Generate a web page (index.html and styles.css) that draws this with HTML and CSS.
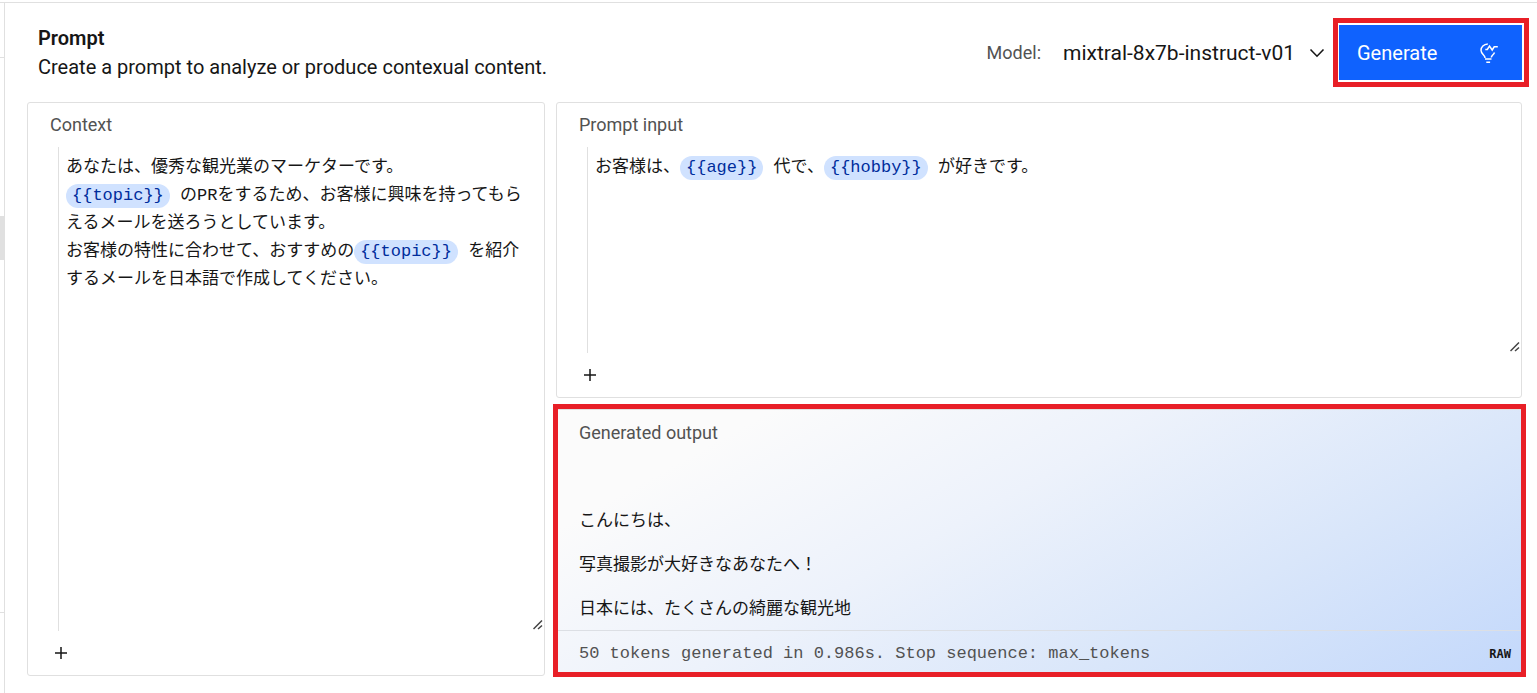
FILE: index.html
```
<!DOCTYPE html>
<html lang="en">
<head>
<meta charset="utf-8">
<title>Prompt</title>
<link rel="stylesheet" href="styles.css">
</head>
<body>
<div class="app">
  <aside class="rail"><div class="rail-top"></div><div class="rail-body"><div class="rail-handle"></div></div><div class="rail-foot"></div></aside>
  <main class="page">
    <header class="header">
      <div class="intro">
        <h1 class="title">Prompt</h1>
        <p class="subtitle">Create a prompt to analyze or produce contexual content.</p>
      </div>
      <div class="actions">
        <label class="label" for="model">Model:</label>
        <div class="select-wrap">
          <select class="select" id="model"><option>mixtral-8x7b-instruct-v01</option></select>
          <svg class="chevron" width="16" height="10" viewBox="0 0 16 10" aria-hidden="true"><path d="M1.500 1.500 8 8.200l6.500-6.700" fill="none" stroke="#161616" stroke-width="1.600"/></svg>
        </div>
        <button class="generate" type="button">
          <span>Generate</span>
          <svg width="20" height="22" viewBox="0 0 20 22" fill="none" stroke="#fff" stroke-width="1.500" aria-hidden="true"><path d="M8.800 2C4.700 2.200 2 5 2 8.300c0 2.500 1.400 3.800 2.700 5 .8.800 1.300 1.500 1.300 2.700M12.300 15.500c.1-.9.600-1.600 1.200-2.200.9-.8 1.600-1.600 2-2.700M6.300 7.500h2l2.200-3.500 2.700 4 2-3.200h3.600M6 17h6.500M7.300 20.300h3.800"/></svg>
        </button>
      </div>
    </header>
    <div class="panels">
      <section class="panel context">
        <h2 class="label" id="context-label">Context</h2>
        <div class="editor" role="textbox" aria-multiline="true" aria-labelledby="context-label" contenteditable="true" spellcheck="false" lang="ja"><p>あなたは、優秀な観光業のマーケターです。</p><p><span class="variable">{{topic}}</span> のPRをするため、お客様に興味を持ってもらえるメールを送ろうとしています。</p><p>お客様の特性に合わせて、おすすめの<span class="variable">{{topic}}</span> を紹介するメールを日本語で作成してください。</p></div>
        <svg class="grip" width="10" height="10" viewBox="0 0 10 10" aria-hidden="true"><path d="M0.500 9 9 0.500M5 9 9 5.500" stroke="#444" stroke-width="1.500"/></svg>
        <button class="add" type="button" aria-label="Add to context"><svg width="12" height="12" viewBox="0 0 12 12" aria-hidden="true"><path d="M6 0v12M0 6h12" stroke="#161616" stroke-width="1.500"/></svg></button>
      </section>
      <div class="column">
        <section class="panel prompt">
          <h2 class="label" id="input-label">Prompt input</h2>
          <div class="editor" role="textbox" aria-multiline="true" aria-labelledby="input-label" contenteditable="true" spellcheck="false" lang="ja"><p>お客様は、<span class="variable">{{age}}</span> 代で、<span class="variable">{{hobby}}</span> が好きです。</p></div>
          <svg class="grip" width="10" height="10" viewBox="0 0 10 10" aria-hidden="true"><path d="M0.500 9 9 0.500M5 9 9 5.500" stroke="#444" stroke-width="1.500"/></svg>
          <button class="add" type="button" aria-label="Add to prompt input"><svg width="12" height="12" viewBox="0 0 12 12" aria-hidden="true"><path d="M6 0v12M0 6h12" stroke="#161616" stroke-width="1.500"/></svg></button>
        </section>
        <section class="output">
          <h2 class="label">Generated output</h2>
          <div class="result" lang="ja">
            <p>こんにちは、</p>
            <p>写真撮影が大好きなあなたへ！</p>
            <p>日本には、たくさんの綺麗な観光地</p>
          </div>
          <footer class="status">
            <span>50 tokens generated in 0.986s. Stop sequence: max_tokens</span>
            <button class="raw" type="button">RAW</button>
          </footer>
        </section>
      </div>
    </div>
  </main>
</div>
</body>
</html>
```
FILE: styles.css
```
* { box-sizing: border-box; }
body { margin: 0; padding-top: 2px; background: #fff; color: #161616; font-family: Roboto, "Liberation Sans", sans-serif; }
h1, h2, p { margin: 0; font-weight: 400; }
button { border: 0; padding: 0; background: none; font: inherit; color: inherit; cursor: pointer; }
svg { display: block; }

.app { display: flex; min-height: calc(100vh - 2px); border-top: 1px solid #e0e0e0; }

.rail { display: flex; flex-direction: column; flex: 0 0 5px; border-right: 1px solid #e0e0e0; }
.rail-top { height: 55px; border-bottom: 1px solid #e0e0e0; }
.rail-body { flex: 1; padding-top: 158px; }
.rail-handle { height: 44px; background: #e0e0e0; }
.rail-foot { height: 81px; border-top: 1px solid #e0e0e0; }

.page { flex: 1; min-width: 0; display: flex; flex-direction: column; padding: 0 15px 17px 22px; }

.header { display: flex; align-items: flex-start; justify-content: space-between; min-height: 99px; padding-top: 22px; }
.intro { padding-left: 11px; }
.title { font-size: 20px; line-height: 26px; font-weight: 600; }
.subtitle { font-size: 20px; line-height: 32px; }
.actions { display: flex; align-items: center; }
.label { font-size: 18px; line-height: 24px; color: #525252; }

.select-wrap { position: relative; margin: 0 14px 0 22px; }
.select { appearance: none; width: 262px; height: 40px; padding: 0; border: 0; background: transparent; font: inherit; font-size: 21px; color: #161616; }
.chevron { position: absolute; right: 0; top: 15px; pointer-events: none; }

.generate { position: relative; display: flex; align-items: center; justify-content: space-between; width: 183px; height: 55px; padding: 0 23px 0 18px; background: #0f62fe; color: #fff; font-size: 20px; }
.generate::after { content: ""; position: absolute; inset: -7px -7px -7px -6px; border: 5px solid #e81f27; pointer-events: none; }

.panels { flex: 1; display: grid; grid-template-columns: 518fr 966fr; gap: 11px; }
.panel { position: relative; display: flex; flex-direction: column; padding: 10px 0 10px 22px; border: 1px solid #e0e0e0; border-radius: 3px; }
.column { display: grid; grid-template-rows: 296fr 267fr; gap: 11px; }

.editor { flex: 1; margin: 10px 0 0 8px; padding: 7px 8px 0 7px; border-left: 1px solid #e0e0e0; outline: 0; font-family: "Liberation Mono", "Noto Sans CJK JP", monospace; font-size: 17px; line-height: 28px; line-break: anywhere; }
.variable { display: inline-block; padding: 0 6px; border-radius: 12px; background: #d0e2ff; color: #002d9c; line-height: 24px; }
.grip { position: absolute; right: 1px; bottom: 45px; }
.add { display: grid; place-items: center; width: 24px; height: 24px; margin: 10px 0 0 -1px; }

.output { position: relative; display: flex; flex-direction: column; padding-top: 11px; border-top: 1px solid #e0e0e0; background: linear-gradient(151deg, #fbfbfb 15%, #edf2fb 42%, #d9e6fa 70%, #c3d8fb 100%); }
.output::after { content: ""; position: absolute; inset: -6px -4px -1px -3px; border: 5px solid #e81f27; pointer-events: none; }
.output .label { padding-left: 23px; }
.result { flex: 1; display: flex; flex-direction: column; justify-content: flex-end; gap: 20px; padding: 0 23px 11px; font-family: "Noto Sans CJK JP", sans-serif; font-size: 17px; line-height: 24px; }
.status { display: flex; align-items: center; justify-content: space-between; height: 46px; padding: 0 11px 0 23px; border-top: 1px solid #dcdfe4; font-family: "Liberation Mono", monospace; font-size: 17px; color: #525252; }
.raw { font-family: "DejaVu Sans Mono", monospace; font-size: 12px; font-weight: 700; color: #161616; }
```
